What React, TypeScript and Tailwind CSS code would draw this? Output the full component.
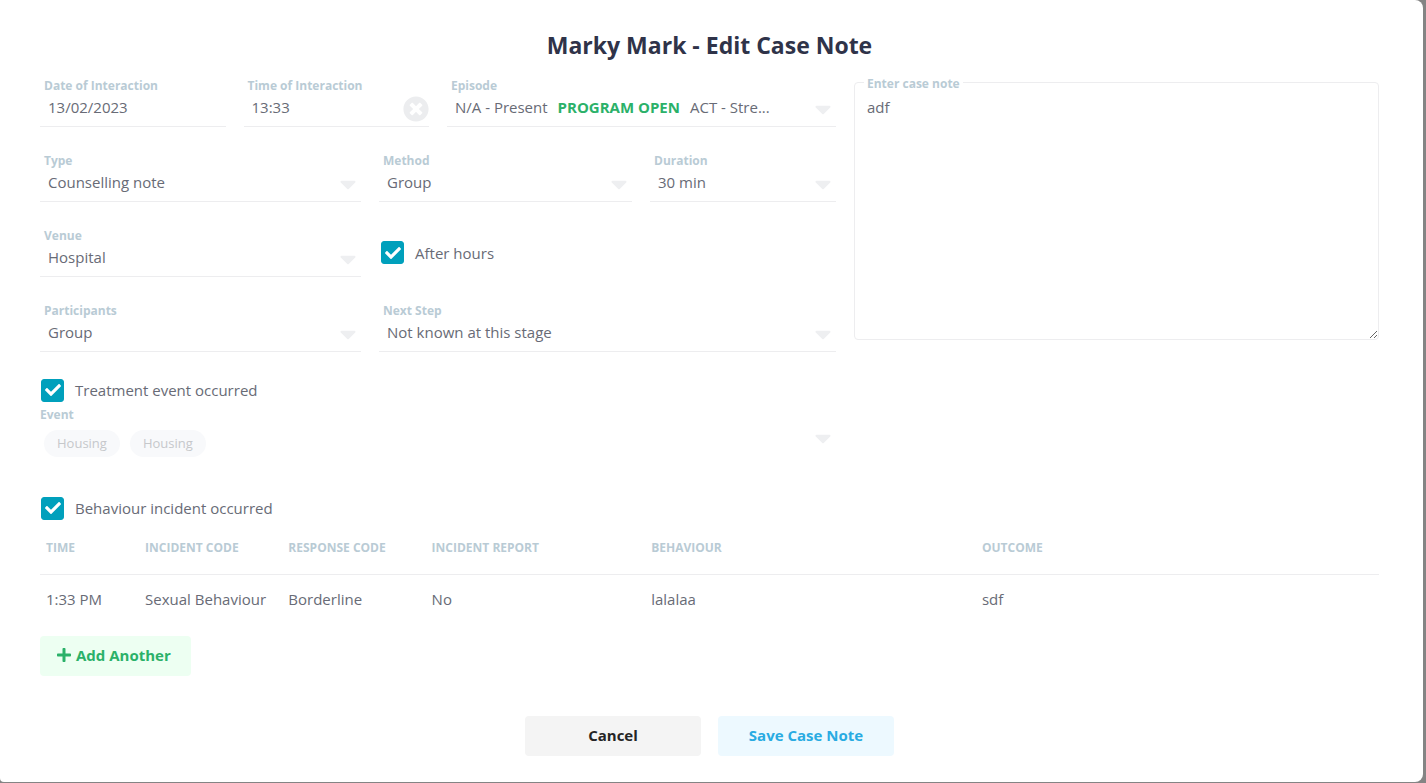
import { useState, type ReactNode } from "react";
import { FaCaretDown, FaCheck, FaPlus, FaTimesCircle } from "react-icons/fa";

const labelClass = "block text-[12px] leading-4 font-bold text-[#b9cbd5]";
const valueClass =
  "block h-8 w-full appearance-none bg-transparent px-2 pb-1.5 text-left text-[15px] text-[#686b76] outline-none";

function Field({ id, label, children }: { id: string; label: string; children: ReactNode }) {
  return (
    <div className="min-w-0 border-b border-[#ededef]">
      <label htmlFor={id} className={`${labelClass} px-1`}>
        {label}
      </label>
      <div className="relative">{children}</div>
    </div>
  );
}

function Caret() {
  return (
    <FaCaretDown
      aria-hidden="true"
      className="pointer-events-none absolute top-0.5 right-0 size-[26px] text-[#eeeff1]"
    />
  );
}

function SelectField({ id, label, options }: { id: string; label: string; options: string[] }) {
  return (
    <Field id={id} label={label}>
      <select id={id} className={valueClass}>
        {options.map((option) => (
          <option key={option}>{option}</option>
        ))}
      </select>
      <Caret />
    </Field>
  );
}

function Check({ id, label }: { id: string; label: string }) {
  const [checked, setChecked] = useState(true);
  return (
    <div className="flex items-center gap-[11px] pl-px">
      <span className="relative flex size-[23px] shrink-0 items-center justify-center">
        <input
          id={id}
          type="checkbox"
          checked={checked}
          onChange={(event) => setChecked(event.target.checked)}
          className="size-[23px] appearance-none rounded-[3px] border border-[#00a0bc] bg-white checked:bg-[#00a0bc]"
        />
        {checked && (
          <FaCheck aria-hidden="true" className="pointer-events-none absolute inset-0 m-auto size-4 text-white" />
        )}
      </span>
      <label htmlFor={id} className="text-[15px] leading-6">
        {label}
      </label>
    </div>
  );
}

const columns = [
  { title: "TIME", width: "w-[7.4%]", value: "1:33 PM" },
  { title: "INCIDENT CODE", width: "w-[10.7%]", value: "Sexual Behaviour" },
  { title: "RESPONSE CODE", width: "w-[10.7%]", value: "Borderline" },
  { title: "INCIDENT REPORT", width: "w-[16.4%]", value: "No" },
  { title: "BEHAVIOUR", width: "w-[24.7%]", value: "lalalaa" },
  { title: "OUTCOME", width: "w-[30.1%]", value: "sdf" },
];

export default function App() {
  const [time, setTime] = useState("13:33");

  return (
    <div className="flex min-h-screen bg-[#848484] pr-[3px] pb-px font-['Open_Sans',sans-serif] text-[#686b76]">
      <main className="w-full rounded-r-lg rounded-bl-sm bg-white pt-[27px] pr-11 pb-6 pl-10">
        <h1 className="text-center text-[23px] leading-9 font-bold text-[#2f3349]">
          Marky Mark - Edit Case Note
        </h1>

        <form onSubmit={(event) => event.preventDefault()}>
          <div className="mt-[15px] grid grid-cols-[796fr_525fr] gap-x-[18px]">
            <div className="flex min-w-0 flex-col gap-[26px]">
              <div className="grid grid-cols-[371fr_371fr_778fr] gap-x-[18px]">
                <Field id="date" label="Date of Interaction">
                  <input id="date" type="text" defaultValue="13/02/2023" className={valueClass} />
                </Field>
                <Field id="time" label="Time of Interaction">
                  <input
                    id="time"
                    type="text"
                    value={time}
                    onChange={(event) => setTime(event.target.value)}
                    className={valueClass}
                  />
                  <button
                    type="button"
                    aria-label="Clear time"
                    onClick={() => setTime("")}
                    className="absolute top-0.5 right-0 text-[#ecedef]"
                  >
                    <FaTimesCircle className="size-[26px]" />
                  </button>
                </Field>
                <Field id="episode" label="Episode">
                  <button
                    id="episode"
                    type="button"
                    aria-haspopup="listbox"
                    className={valueClass}
                  >
                    <span className="flex gap-2.5 whitespace-nowrap">
                      <span>N/A - Present</span>
                      <span className="font-bold text-[#2bb169]">PROGRAM OPEN</span>
                      <span>ACT - Stre...</span>
                    </span>
                  </button>
                  <Caret />
                </Field>
              </div>

              <div className="grid grid-cols-[321fr_253fr_186fr] gap-x-[18px]">
                <SelectField id="type" label="Type" options={["Counselling note"]} />
                <SelectField id="method" label="Method" options={["Group"]} />
                <SelectField id="duration" label="Duration" options={["30 min"]} />
              </div>

              <div className="grid grid-cols-[321fr_457fr] gap-x-[18px]">
                <SelectField id="venue" label="Venue" options={["Hospital"]} />
                <div className="self-center pl-px">
                  <Check id="after-hours" label="After hours" />
                </div>
              </div>

              <div className="grid grid-cols-[321fr_457fr] gap-x-[18px]">
                <SelectField id="participants" label="Participants" options={["Group"]} />
                <SelectField id="next-step" label="Next Step" options={["Not known at this stage"]} />
              </div>

              <div>
                <Check id="treatment" label="Treatment event occurred" />
                <label htmlFor="event" className={`${labelClass} mt-[5px]`}>
                  Event
                </label>
                <div className="relative">
                  <button
                    id="event"
                    type="button"
                    aria-haspopup="listbox"
                    className="flex w-full gap-2.5 px-1 pt-[7px] text-[13px] leading-[27px] text-[#c6c8cb]"
                  >
                    <span className="rounded-full bg-[#f8f9fb] px-[13px]">Housing</span>
                    <span className="rounded-full bg-[#f8f9fb] px-[13px]">Housing</span>
                  </button>
                  <Caret />
                </div>
              </div>
            </div>

            <div className="relative self-start pt-1">
              <label htmlFor="note" className={`${labelClass} absolute -top-0.5 left-2.5 bg-white px-[3px]`}>
                Enter case note
              </label>
              <textarea
                id="note"
                defaultValue="adf"
                className="block h-[258px] w-full rounded-[4px] border border-[#ededef] px-3 py-3 text-[15px] leading-6 outline-none"
              />
            </div>
          </div>

          <div className="mt-[39px]">
            <Check id="incident" label="Behaviour incident occurred" />
          </div>

          <table className="mt-2.5 w-full table-fixed text-left text-[15px]">
            <thead>
              <tr className="border-b border-[#ededef]">
                {columns.map((column) => (
                  <th
                    key={column.title}
                    scope="col"
                    className={`${column.width} pt-[9px] pb-[17px] pl-1.5 text-[12px] leading-[18px] font-bold whitespace-nowrap text-[#b9cbd5]`}
                  >
                    {column.title}
                  </th>
                ))}
              </tr>
            </thead>
            <tbody>
              <tr>
                {columns.map((column) => (
                  <td key={column.title} className="py-3 pl-1.5 leading-6 whitespace-nowrap">
                    {column.value}
                  </td>
                ))}
              </tr>
            </tbody>
          </table>

          <button
            type="button"
            className="mt-[13px] flex h-10 items-center gap-1 rounded-[4px] bg-[#edfff2] pr-5 pb-0.5 pl-4 text-[15px] font-bold text-[#2bb169]"
          >
            <FaPlus aria-hidden="true" className="size-4" />
            Add Another
          </button>

          <div className="mt-10 flex justify-center gap-[17px] text-[15px] font-bold">
            <button type="button" className="h-10 w-44 rounded-[4px] bg-[#f4f4f4] pb-0.5 text-[#252525]">
              Cancel
            </button>
            <button type="submit" className="h-10 w-44 rounded-[4px] bg-[#edf9ff] pb-0.5 text-[#29abe2]">
              Save Case Note
            </button>
          </div>
        </form>
      </main>
    </div>
  );
}
